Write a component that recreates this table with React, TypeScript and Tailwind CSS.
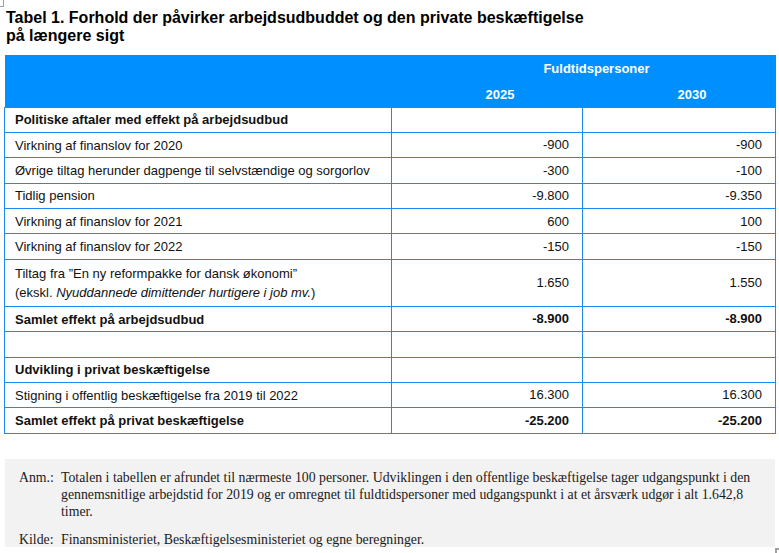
const rows: { label: React.ReactNode; a: string; b: string; bold?: boolean; tall?: boolean }[] = [
  { label: "Politiske aftaler med effekt på arbejdsudbud", a: "", b: "", bold: true },
  { label: "Virkning af finanslov for 2020", a: "-900", b: "-900" },
  { label: "Øvrige tiltag herunder dagpenge til selvstændige og sorgorlov", a: "-300", b: "-100" },
  { label: "Tidlig pension", a: "-9.800", b: "-9.350" },
  { label: "Virkning af finanslov for 2021", a: "600", b: "100" },
  { label: "Virkning af finanslov for 2022", a: "-150", b: "-150" },
  {
    label: (
      <>
        Tiltag fra ”En ny reformpakke for dansk økonomi”
        <br />
        (ekskl. <i>Nyuddannede dimittender hurtigere i job mv.</i>)
      </>
    ),
    a: "1.650",
    b: "1.550",
    tall: true,
  },
  { label: "Samlet effekt på arbejdsudbud", a: "-8.900", b: "-8.900", bold: true },
  { label: "", a: "", b: "" },
  { label: "Udvikling i privat beskæftigelse", a: "", b: "", bold: true },
  { label: "Stigning i offentlig beskæftigelse fra 2019 til 2022", a: "16.300", b: "16.300" },
  { label: "Samlet effekt på privat beskæftigelse", a: "-25.200", b: "-25.200", bold: true },
];

export default function App() {
  return (
    <div className="relative w-[779px] h-[553px] bg-white overflow-hidden font-['Liberation_Sans',Arial,sans-serif] text-black">
      {/* word corner marks */}
      <div className="absolute left-0 top-0 w-[4px] h-[7px] border-r border-b border-[#a0a0a0]" />
      <div className="absolute left-[775px] top-[548px] w-[5px] h-[6px] border-l-2 border-t-2 border-[#a0a0a0]" />

      <h1 className="pl-[6px] pt-[9px] text-[16px] leading-[18px] font-bold">
        Tabel 1. Forhold der påvirker arbejdsudbuddet og den private beskæftigelse
        <br />
        på længere sigt
      </h1>

      <table className="ml-[4px] mt-[10px] w-[771px] border-collapse table-fixed text-[13px]">
        <colgroup>
          <col className="w-[387px]" />
          <col className="w-[191px]" />
          <col className="w-[193px]" />
        </colgroup>
        <thead className="bg-[#008fff] text-white font-bold">
          <tr className="h-[27px]">
            <th />
            <th colSpan={2} className="text-center align-middle pt-[1px] pl-[26px] font-bold">
              Fuldtidspersoner
            </th>
          </tr>
          <tr className="h-[25px]">
            <th />
            <th className="text-center pl-[26px] font-bold">2025</th>
            <th className="text-center pl-[26px] font-bold">2030</th>
          </tr>
        </thead>
        <tbody>
          {rows.map((r, i) => (
            <tr key={i} className={r.tall ? "h-[47px]" : "h-[25.4px]"}>
              <td
                className={`border border-[#1a8cf0] pl-[10px] leading-[19px] text-[#111] ${
                  r.bold ? "font-bold" : ""
                }`}
              >
                {r.label}
              </td>
              <td
                className={`border border-[#1a8cf0] pr-[13px] text-right text-[#111] ${
                  r.bold ? "font-bold" : ""
                }`}
              >
                {r.a}
              </td>
              <td
                className={`border border-[#1a8cf0] pr-[13px] text-right text-[#111] ${
                  r.bold ? "font-bold" : ""
                }`}
              >
                {r.b}
              </td>
            </tr>
          ))}
        </tbody>
      </table>

      <div className="ml-[5px] mt-[25px] w-[770px] h-[88px] bg-[#f2f2f2] pt-[10px] font-['Liberation_Serif',serif] text-[13.8px] leading-[17px] text-[#1a1a1a]">
        <div className="flex">
          <div className="w-[56px] shrink-0 pl-[14px]">Anm.:</div>
          <div className="whitespace-nowrap">
            Totalen i tabellen er afrundet til nærmeste 100 personer. Udviklingen i den offentlige beskæftigelse tager udgangspunkt i den
            <br />
            gennemsnitlige arbejdstid for 2019 og er omregnet til fuldtidspersoner med udgangspunkt i at et årsværk udgør i alt 1.642,8
            <br />
            timer.
          </div>
        </div>
        <div className="flex mt-[11px]">
          <div className="w-[56px] shrink-0 pl-[14px]">Kilde:</div>
          <div>Finansministeriet, Beskæftigelsesministeriet og egne beregninger.</div>
        </div>
      </div>
    </div>
  );
}
